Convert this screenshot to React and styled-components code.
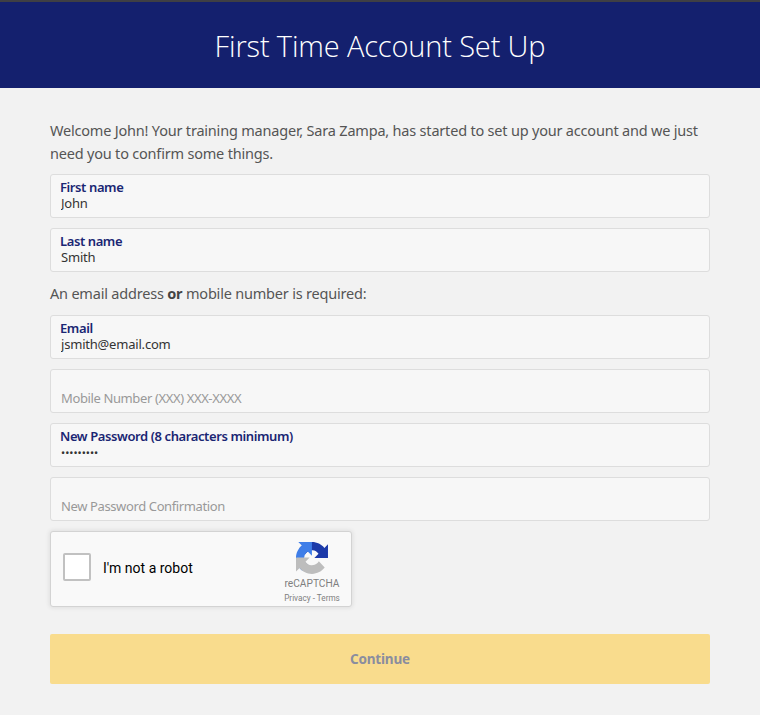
import React from "react";
import styled, { createGlobalStyle } from "styled-components";

const GlobalStyle = createGlobalStyle`
  html, body {
    margin: 0;
    padding: 0;
    background: #f2f2f2;
  }
  * {
    box-sizing: border-box;
  }
`;

const Page = styled.div`
  width: 760px;
  height: 715px;
  overflow: hidden;
  font-family: "Noto Sans", "Open Sans", sans-serif;
  background: #f2f2f2;
`;

const Header = styled.header`
  height: 88px;
  border-top: 2px solid #3f3f44;
  background: #14206e;
  display: flex;
  align-items: center;
  justify-content: center;
`;

const Title = styled.h1`
  margin: 0;
  font-size: 29px;
  font-weight: 300;
  color: #fff;
  font-family: "Open Sans", sans-serif;
  letter-spacing: -0.15px;
`;

const Form = styled.form`
  padding: 31px 50px 0;
  display: flex;
  flex-direction: column;
`;

const Intro = styled.p`
  margin: 0 0 9px;
  font-size: 14.5px;
  line-height: 23px;
  color: #555;
  letter-spacing: -0.2px;
`;

const Note = styled.p`
  margin: 10px 0 11px;
  font-size: 14.5px;
  line-height: 22px;
  color: #555;
  letter-spacing: -0.2px;
  b {
    color: #444;
    font-weight: 700;
  }
`;

const Fields = styled.div`
  display: flex;
  flex-direction: column;
  gap: 10px;
`;

const FieldBox = styled.label`
  display: block;
  height: 44px;
  padding: 4px 9px 0;
  background: #f7f7f7;
  border: 1px solid #dddddd;
  border-radius: 3px;
`;

const FieldLabel = styled.span`
  display: block;
  height: 16px;
  font-size: 13px;
  line-height: 17px;
  font-weight: 600;
  color: #1a2673;
  letter-spacing: -0.4px;
`;

const FieldInput = styled.input`
  display: block;
  width: 100%;
  height: 17px;
  padding: 0 0 0 1px;
  margin: 0;
  border: 0;
  outline: 0;
  background: transparent;
  font-family: inherit;
  font-size: 13px;
  line-height: 17px;
  color: #333;
  letter-spacing: -0.2px;
  &::placeholder {
    color: #999;
    opacity: 1;
  }
`;

const PlaceholderInput = styled(FieldInput)`
  margin-top: 16px;
  letter-spacing: -0.38px;
`;

const PasswordInput = styled(FieldInput)`
  font-size: 11px;
  letter-spacing: 0;
`;

const Captcha = styled.div`
  margin-top: 10px;
  width: 302px;
  height: 76px;
  background: #f9f9f9;
  border: 1px solid #d3d3d3;
  border-radius: 3px;
  box-shadow: 0 0 4px 1px rgba(0, 0, 0, 0.08);
  display: flex;
  align-items: center;
  padding: 0 10px 0 12px;
  font-family: Roboto, "Liberation Sans", sans-serif;
`;

const CaptchaBox = styled.div`
  width: 28px;
  height: 28px;
  margin-bottom: 4px;
  background: #fff;
  border: 2px solid #c1c1c1;
  border-radius: 2px;
`;

const CaptchaText = styled.span`
  margin: 0 0 3px 12px;
  flex: 1;
  font-size: 14px;
  color: #000;
`;

const CaptchaLogo = styled.div`
  width: 58px;
  margin-top: 7px;
  display: flex;
  flex-direction: column;
  align-items: center;
`;

const LogoName = styled.span`
  margin-top: 4px;
  font-size: 10.2px;
  line-height: 12px;
  color: #7f7f7f;
`;

const LogoLinks = styled.span`
  margin-top: 3px;
  font-size: 8.2px;
  line-height: 10px;
  color: #7f7f7f;
  white-space: nowrap;
`;

const ContinueButton = styled.button`
  margin-top: 27px;
  height: 50px;
  width: 100%;
  padding: 0;
  border: 0;
  border-radius: 2px;
  background: #f9dc8d;
  color: #8a8d9f;
  font-family: inherit;
  font-size: 13.5px;
  font-weight: 700;
  letter-spacing: -0.2px;
`;

const RecaptchaIcon = () => (
  <svg width="32" height="32" viewBox="0 0 64 64">
    <path
      d="M64 31.955l-.033-1.37V4.687l-7.16 7.16C50.948 4.674 42.033.093 32.05.093c-10.4 0-19.622 4.96-25.458 12.64l11.736 11.86a15.55 15.55 0 0 1 4.754-5.334c2.05-1.6 4.952-2.906 8.968-2.906.485 0 .86.057 1.135.163 4.976.393 9.288 3.14 11.828 7.124l-8.307 8.307 26.304.001"
      fill="#1c3aa9"
    />
    <path
      d="M31.862.001l-1.37.033H4.594l7.16 7.16C4.58 13.05 0 21.967 0 31.95c0 10.4 4.96 19.622 12.64 25.458L24.5 45.672a15.55 15.55 0 0 1-5.334-4.754c-1.6-2.05-2.906-4.952-2.906-8.968 0-.485.057-.86.163-1.135.393-4.976 3.14-9.288 7.124-11.828l8.307 8.307L31.862.001"
      fill="#3f7ee8"
    />
    <path
      d="M0 31.95l.033 1.37v25.898l7.16-7.16c5.86 7.173 14.775 11.754 24.76 11.754 10.4 0 19.622-4.96 25.458-12.64L45.674 38.3a15.55 15.55 0 0 1-4.754 5.334c-2.05 1.6-4.952 2.906-8.968 2.906-.485 0-.86-.057-1.135-.163-4.976-.393-9.288-3.14-11.828-7.124l8.307-8.307-26.304-.001"
      fill="#bdbdbd"
    />
  </svg>
);

const App = () => (
  <Page>
    <GlobalStyle />
    <Header>
      <Title>First Time Account Set Up</Title>
    </Header>
    <Form onSubmit={(e) => e.preventDefault()}>
      <Intro>
        Welcome John! Your training manager, Sara Zampa, has started to set up
        your account and we just need you to confirm some things.
      </Intro>
      <Fields>
        <FieldBox>
          <FieldLabel>First name</FieldLabel>
          <FieldInput defaultValue="John" />
        </FieldBox>
        <FieldBox>
          <FieldLabel>Last name</FieldLabel>
          <FieldInput defaultValue="Smith" />
        </FieldBox>
      </Fields>
      <Note>
        An email address <b>or</b> mobile number is required:
      </Note>
      <Fields>
        <FieldBox>
          <FieldLabel>Email</FieldLabel>
          <FieldInput defaultValue="jsmith@email.com" />
        </FieldBox>
        <FieldBox>
          <PlaceholderInput placeholder="Mobile Number (XXX) XXX-XXXX" />
        </FieldBox>
        <FieldBox>
          <FieldLabel>New Password (8 characters minimum)</FieldLabel>
          <PasswordInput type="password" defaultValue="password1" />
        </FieldBox>
        <FieldBox>
          <PlaceholderInput type="password" placeholder="New Password Confirmation" />
        </FieldBox>
      </Fields>
      <Captcha>
        <CaptchaBox />
        <CaptchaText>I'm not a robot</CaptchaText>
        <CaptchaLogo>
          <RecaptchaIcon />
          <LogoName>reCAPTCHA</LogoName>
          <LogoLinks>Privacy - Terms</LogoLinks>
        </CaptchaLogo>
      </Captcha>
      <ContinueButton type="button">Continue</ContinueButton>
    </Form>
  </Page>
);

export default App;
